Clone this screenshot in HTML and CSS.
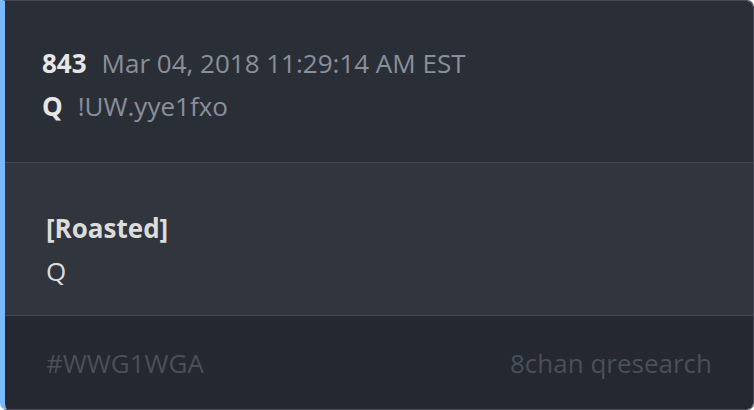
FILE: index.html
```html
<!DOCTYPE html>
<html>
<head>
<meta charset="utf-8">
<link rel="stylesheet" href="styles.css">
</head>
<body>
<div class="card">
  <div class="head">
    <div class="line"><span class="num">843</span><span class="date">Mar 04, 2018 11:29:14 AM EST</span></div>
    <div class="line"><span class="num">Q</span><span class="trip">!UW.yye1fxo</span></div>
  </div>
  <div class="body">
    <div class="line bold">[Roasted]</div>
    <div class="line">Q</div>
  </div>
  <div class="foot">
    <span>#WWG1WGA</span>
    <span>8chan qresearch</span>
  </div>
</div>
</body>
</html>
```
FILE: styles.css
```css
html, body {
  margin: 0;
  padding: 0;
  background: #ffffff;
}
body {
  font-family: "Open Sans", "Noto Sans", sans-serif;
  font-size: 26px;
}
.card {
  width: 748px;
  height: 408px;
  border: 1px solid #454a54;
  border-left: 5px solid #7ab8ff;
  border-radius: 0 7px 7px 7px;
  overflow: hidden;
  display: flex;
  flex-direction: column;
}
.line {
  line-height: 43px;
  white-space: nowrap;
}
.head {
  background: #2a2e37;
  padding: 41px 37px 34px 37px;
  border-bottom: 1px solid #434852;
}
.num {
  font-weight: 700;
  color: #e6e6e6;
  margin-right: 15px;
}
.date, .trip {
  color: #8a8f9a;
}
.body {
  background: #30353e;
  padding: 44px 41px 0 41px;
  flex: 1;
  border-bottom: 1px solid #434852;
  color: #dcdcdc;
}
.bold {
  font-weight: 700;
}
.foot {
  background: #252830;
  height: 93px;
  padding: 0 41px;
  display: flex;
  align-items: center;
  justify-content: space-between;
  color: #4a4f59;
}
```
